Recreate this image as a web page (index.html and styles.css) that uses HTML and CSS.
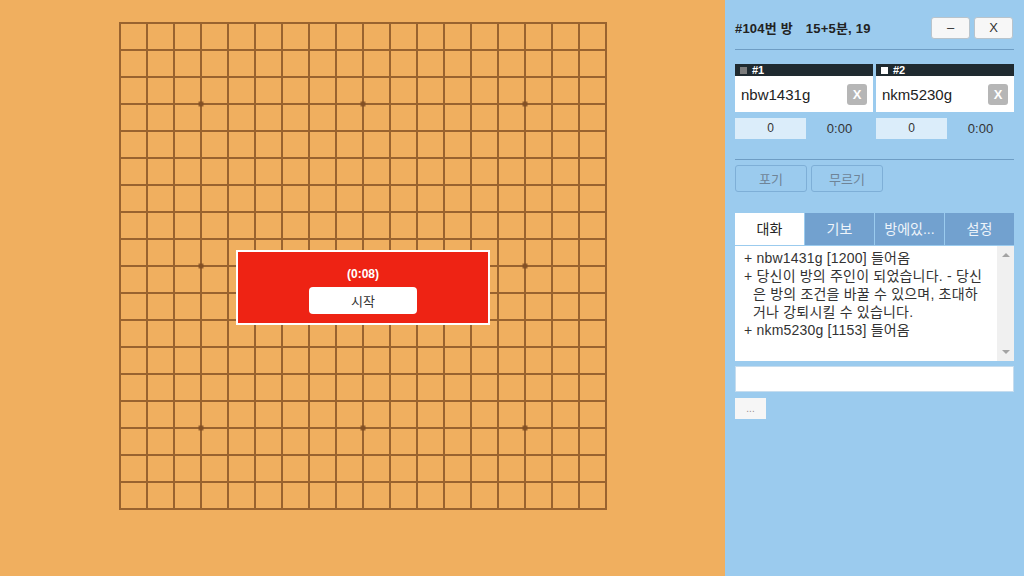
FILE: index.html
```html
<html>

<head>
    <title>#104번 방</title>
    <link rel="stylesheet" href="styles.css">
</head>

<body>
    <main class="room">
        <div class="board-area">
            <div class="board">
                <svg width="488" height="488" viewBox="0 0 488 488">
                    <defs>
                        <pattern id="cell" width="27" height="27" patternUnits="userSpaceOnUse">
                            <path d="M0 1H27M1 0V27" stroke="#8a5627" stroke-opacity="0.85" stroke-width="2" fill="none" />
                        </pattern>
                    </defs>
                    <rect x="0" y="0" width="488" height="488" fill="url(#cell)" />
                    <g fill="#7d4b22" fill-opacity="0.8">
                        <rect x="79.5" y="79.5" width="5" height="5" />
                        <rect x="241.5" y="79.5" width="5" height="5" />
                        <rect x="403.5" y="79.5" width="5" height="5" />
                        <rect x="79.5" y="241.5" width="5" height="5" />
                        <rect x="241.5" y="241.5" width="5" height="5" />
                        <rect x="403.5" y="241.5" width="5" height="5" />
                        <rect x="79.5" y="403.5" width="5" height="5" />
                        <rect x="241.5" y="403.5" width="5" height="5" />
                        <rect x="403.5" y="403.5" width="5" height="5" />
                    </g>
                </svg>
                <div class="start-box">
                    <span class="countdown">(0:08)</span>
                    <button type="button" class="start-btn">시작</button>
                </div>
            </div>
        </div>

        <aside class="side">
            <div class="room-head">
                <span class="room-title">#104번 방<span class="room-rule">15+5분, 19</span></span>
                <div class="win-btns">
                    <button type="button" class="win-btn">–</button>
                    <button type="button" class="win-btn">X</button>
                </div>
            </div>
            <hr class="rule">

            <div class="players">
                <div class="player">
                    <div class="player-bar"><span class="stone black"></span>#1</div>
                    <div class="player-name">
                        <span>nbw1431g</span>
                        <button type="button" class="kick">X</button>
                    </div>
                    <div class="player-stats">
                        <span class="score">0</span>
                        <span class="clock">0:00</span>
                    </div>
                </div>
                <div class="player">
                    <div class="player-bar"><span class="stone white"></span>#2</div>
                    <div class="player-name">
                        <span>nkm5230g</span>
                        <button type="button" class="kick">X</button>
                    </div>
                    <div class="player-stats">
                        <span class="score">0</span>
                        <span class="clock">0:00</span>
                    </div>
                </div>
            </div>
            <hr class="rule rule-low">

            <div class="actions">
                <button type="button" class="act-btn" disabled>포기</button>
                <button type="button" class="act-btn" disabled>무르기</button>
            </div>

            <div class="tabs">
                <span class="tab active">대화</span>
                <span class="tab">기보</span>
                <span class="tab">방에있...</span>
                <span class="tab">설정</span>
            </div>
            <div class="chat">
                <div class="chat-log">
                    <div class="msg">+ nbw1431g [1200] 들어옴</div>
                    <div class="msg">+ 당신이 방의 주인이 되었습니다. - 당신은 방의 조건을 바꿀 수 있으며, 초대하거나 강퇴시킬 수 있습니다.</div>
                    <div class="msg">+ nkm5230g [1153] 들어옴</div>
                </div>
                <div class="scrollbar">
                    <span class="arrow up"></span>
                    <span class="arrow down"></span>
                </div>
            </div>
            <input type="text" class="chat-input">
            <button type="button" class="more-btn">...</button>
        </aside>
    </main>
</body>

</html>
```

FILE: styles.css
```css
body {
    margin: 0;
    font-family: "Liberation Sans", "Noto Sans CJK KR", sans-serif;
}

.room {
    display: flex;
    width: 1024px;
    height: 576px;
}

.board-area {
    width: 725px;
    background-color: #f0af5f;
    display: flex;
    justify-content: center;
    align-items: flex-start;
    padding-top: 22px;
    box-sizing: border-box;
}

.board {
    position: relative;
    width: 488px;
    height: 488px;
    margin-left: 1px;
}

.board svg {
    display: block;
}

/* countdown popup in the middle of the board */
.start-box {
    position: absolute;
    left: 117px;
    top: 228px;
    width: 250px;
    height: 56px;
    background-color: #ee2314;
    border: 2px solid #ffffff;
    display: flex;
    flex-direction: column;
    align-items: center;
    padding-top: 15px;
}

.countdown {
    color: #ffffff;
    font-weight: bold;
    font-size: 12px;
    line-height: 14px;
}

.start-btn {
    margin-top: 6px;
    width: 108px;
    height: 27px;
    border: none;
    border-radius: 4px;
    background-color: #ffffff;
    color: #333333;
    font-family: inherit;
    font-size: 13px;
}

.side {
    width: 299px;
    background-color: #9bcbee;
    padding: 0 10px;
    box-sizing: border-box;
    display: flex;
    flex-direction: column;
}

.room-head {
    display: flex;
    justify-content: space-between;
    align-items: center;
    margin-top: 16px;
    height: 23px;
}

.room-title {
    font-size: 13px;
    font-weight: bold;
    color: #222222;
    letter-spacing: 0.2px;
}

.room-rule {
    margin-left: 13px;
}

.win-btns {
    display: flex;
    gap: 4px;
    margin-right: 1px;
}

.win-btn {
    width: 39px;
    height: 22px;
    padding: 0;
    border: 1px solid #b9c4cc;
    border-radius: 3px;
    background-color: #f7f7f7;
    color: #333333;
    font-family: inherit;
    font-size: 13px;
}

.rule {
    border: none;
    border-top: 1px solid #6e9dc4;
    margin: 10px 0 0 0;
    width: 100%;
}

.rule-low {
    margin-top: 20px;
}

.players {
    display: flex;
    gap: 3px;
    margin-top: 14px;
}

.player {
    width: 138px;
}

.player-bar {
    background-color: #1f2a30;
    color: #ffffff;
    font-size: 11px;
    font-weight: bold;
    height: 12px;
    line-height: 12px;
    display: flex;
    align-items: center;
    gap: 5px;
    padding-left: 5px;
}

.stone {
    width: 7px;
    height: 7px;
}

.stone.black {
    background-color: #7c7c7c;
}

.stone.white {
    background-color: #ffffff;
}

.player-name {
    background-color: #ffffff;
    height: 36px;
    display: flex;
    align-items: center;
    justify-content: space-between;
    padding: 0 6px;
    font-size: 15px;
    color: #222222;
}

.kick {
    width: 20px;
    height: 21px;
    border: none;
    border-radius: 3px;
    padding: 0;
    background-color: #b6b6b6;
    color: #ffffff;
    font-family: inherit;
    font-weight: bold;
    font-size: 13px;
}

.player-stats {
    display: flex;
    align-items: center;
    margin-top: 6px;
    height: 21px;
}

.score {
    width: 71px;
    height: 21px;
    line-height: 21px;
    background-color: #dbedfa;
    text-align: center;
    font-size: 12px;
    color: #333333;
}

.clock {
    flex: 1;
    text-align: center;
    font-size: 13px;
    color: #333333;
}

.actions {
    display: flex;
    gap: 4px;
    margin-top: 5px;
}

.act-btn {
    width: 72px;
    height: 27px;
    padding: 0;
    border: 1px solid #7eafd7;
    border-radius: 3px;
    background: transparent;
    color: #6f8497;
    font-family: inherit;
    font-size: 13px;
}

.tabs {
    display: flex;
    gap: 1px;
    margin-top: 21px;
}

.tab {
    flex: 1;
    height: 32px;
    line-height: 32px;
    text-align: center;
    background-color: #72a1cf;
    color: #eef4fa;
    font-size: 14px;
}

.tab.active {
    background-color: #ffffff;
    color: #222222;
}

.chat {
    display: flex;
    height: 115px;
    margin-top: 1px;
    background-color: #ffffff;
}

.chat-log {
    flex: 1;
    padding: 3px 7px 0 9px;
    font-size: 14px;
    line-height: 18px;
    letter-spacing: 0.2px;
    color: #333333;
    word-break: break-all;
}

.msg {
    padding-left: 9px;
    text-indent: -9px;
}

.scrollbar {
    width: 17px;
    background-color: #f0f0f0;
    display: flex;
    flex-direction: column;
    justify-content: space-between;
    align-items: center;
    padding: 7px 0;
    box-sizing: border-box;
}

.arrow {
    width: 0;
    height: 0;
    border-left: 4px solid transparent;
    border-right: 4px solid transparent;
}

.arrow.up {
    border-bottom: 4px solid #a3a3a3;
}

.arrow.down {
    border-top: 4px solid #a3a3a3;
}

.chat-input {
    margin-top: 5px;
    height: 26px;
    border: 1px solid #c6ddef;
    background-color: #ffffff;
    box-sizing: border-box;
    width: 100%;
}

.more-btn {
    margin-top: 6px;
    width: 31px;
    height: 21px;
    padding: 0;
    border: none;
    background-color: #f6f6f6;
    color: #9a8f8f;
    font-family: inherit;
    font-size: 10px;
}
```
